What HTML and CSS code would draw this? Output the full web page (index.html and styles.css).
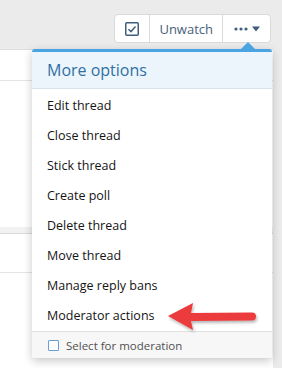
FILE: index.html
```html
<!DOCTYPE html>
<html lang="en">

<head>
    <meta charset="UTF-8">
    <meta name="viewport" content="width=device-width, initial-scale=1.0">
    <title>More options</title>
    <link rel="stylesheet" href="styles.css">
</head>

<body>
    <div class="topbar">
        <div class="btn-group">
            <span class="btn btn-check">
                <svg width="14" height="14" viewBox="0 0 14 14">
                    <rect x="0.75" y="0.75" width="12.5" height="12.5" rx="1" fill="none" stroke="#3f5e7d" stroke-width="1.5"/>
                    <path d="M3.5 7.2 L6 9.6 L10.5 4.6" fill="none" stroke="#3f5e7d" stroke-width="1.5"/>
                </svg>
            </span>
            <span class="btn btn-text">Unwatch</span>
            <span class="btn btn-more">
                <svg width="14" height="4" viewBox="0 0 14 4">
                    <circle cx="2" cy="2" r="1.6" fill="#3f5e7d"/>
                    <circle cx="7" cy="2" r="1.6" fill="#3f5e7d"/>
                    <circle cx="12" cy="2" r="1.6" fill="#3f5e7d"/>
                </svg>
                <svg width="8" height="6" viewBox="0 0 8 6"><path d="M0 0.5 H8 L4 5.5 Z" fill="#3f5e7d"/></svg>
            </span>
        </div>
    </div>

    <div class="content">
        <div class="row row-1"></div>
        <div class="row row-2"></div>
        <div class="row row-3"></div>
    </div>

    <div class="menu">
        <span class="menu-arrow"></span>
        <div class="menu-header">More options</div>
        <div class="menu-items">
            <div class="menu-item">Edit thread</div>
            <div class="menu-item">Close thread</div>
            <div class="menu-item">Stick thread</div>
            <div class="menu-item">Create poll</div>
            <div class="menu-item">Delete thread</div>
            <div class="menu-item">Move thread</div>
            <div class="menu-item">Manage reply bans</div>
            <div class="menu-item">Moderator actions</div>
        </div>
        <div class="menu-footer">
            <span class="box"></span>
            <span>Select for moderation</span>
        </div>
    </div>

    <svg class="red-arrow" width="100" height="40" viewBox="0 0 100 40">
        <defs>
            <filter id="sh" x="-20%" y="-40%" width="140%" height="180%">
                <feDropShadow dx="1" dy="2" stdDeviation="1.5" flood-color="#000" flood-opacity="0.3"/>
            </filter>
        </defs>
        <g filter="url(#sh)" fill="#ec3a3c">
            <path d="M2 16 L27 3 L25 13 L86 12.5 Q90 12.5 90 16.5 Q90 20.5 86 20.5 L25 21 L27 30 Z"/>
        </g>
    </svg>
</body>

</html>
```

FILE: styles.css
```css
body {
    margin: 0;
    background: #ebebeb;
    font-family: "Open Sans", "Noto Sans", sans-serif;
    width: 282px;
    height: 368px;
    overflow: hidden;
    position: relative;
}

.topbar {
    height: 49px;
    box-sizing: border-box;
    display: flex;
    justify-content: flex-end;
    padding: 14px 11px 0 0;
}

.btn-group {
    display: flex;
    height: 29px;
    background: #fff;
    border: 1px solid #dadada;
    border-radius: 4px;
    box-sizing: border-box;
}

.btn {
    display: flex;
    align-items: center;
    justify-content: center;
    padding: 0 10px;
    font-size: 13px;
    color: #47617b;
    border-left: 1px solid #dadada;
}

.btn-text {
    padding: 0 9px;
}

.btn-check {
    border-left: none;
    width: 14px;
}

.btn-more {
    width: 27px;
    gap: 4px;
}

.content {
    background: #fff;
    border-top: 1px solid #dedede;
    margin-right: 9px;
    height: 319px;
    box-sizing: border-box;
}

.row-1 {
    height: 30px;
    border-bottom: 1px solid #e4e4e4;
}

.row-2 {
    height: 152px;
    border-bottom: 1px solid #d8d8d8;
    box-shadow: inset 0 -6px 0 #f2f2f2;
}

.row-3 {
    height: 38px;
    border-bottom: 1px solid #e4e4e4;
}

.menu {
    position: absolute;
    left: 32px;
    top: 49px;
    width: 240px;
    background: #fff;
    border-top: 3px solid #4aa4e2;
    border-radius: 3px;
    box-shadow: 0 3px 10px rgba(0, 0, 0, 0.22);
}

.menu-arrow {
    position: absolute;
    right: 17px;
    top: -10px;
    width: 0;
    height: 0;
    border-left: 7px solid transparent;
    border-right: 7px solid transparent;
    border-bottom: 7px solid #4aa4e2;
}

.menu-header {
    background: #edf5fc;
    color: #2f6fa5;
    font-size: 16px;
    line-height: 24px;
    padding: 6px 15px 6px;
    border-bottom: 1px solid #dbe3ea;
}

.menu-items {
    padding: 2px 0 0;
}

.menu-item {
    font-size: 12.5px;
    color: #141414;
    height: 30px;
    line-height: 30px;
    padding: 0 15px;
}

.menu-footer {
    background: #f7f7f7;
    border-top: 1px solid #e0e0e0;
    display: flex;
    align-items: center;
    gap: 7px;
    height: 26px;
    padding: 0 16px;
    font-size: 11.5px;
    color: #505050;
    border-radius: 0 0 3px 3px;
}

.box {
    width: 9px;
    height: 9px;
    border: 1px solid #6a9fcf;
    border-radius: 1px;
    background: #fff;
}

.red-arrow {
    position: absolute;
    left: 166px;
    top: 300px;
}
```
